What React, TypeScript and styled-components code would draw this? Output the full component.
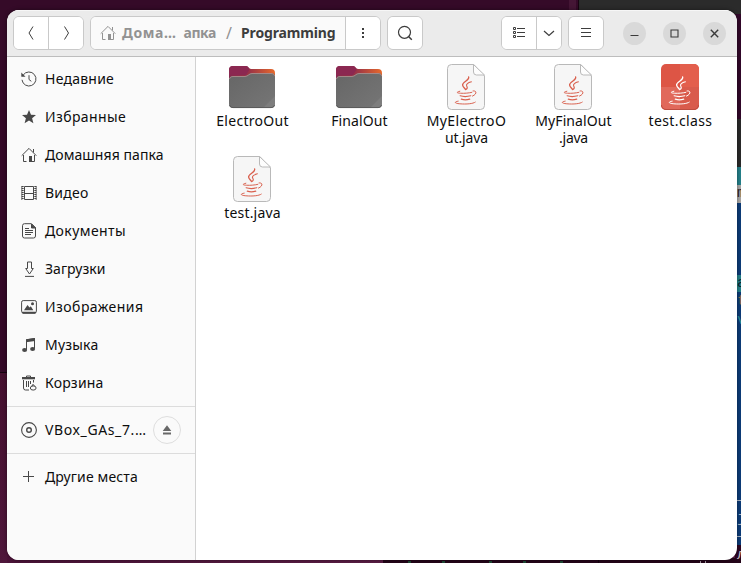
import React from 'react';
import styled, { createGlobalStyle } from 'styled-components';

const GlobalStyle = createGlobalStyle`
  * { box-sizing: border-box; }
  body { margin: 0; overflow: hidden; font-family: "Noto Sans", sans-serif; font-size: 14px; color: #111; }
  button { font: inherit; color: inherit; padding: 0; margin: 0; }
  svg { display: block; flex: none; }
`;

/* ---------- desktop behind the window ---------- */

const Desktop = styled.div`
  position: relative;
  width: 741px;
  height: 563px;
  overflow: hidden;
  background: linear-gradient(to right, #4b1338, #5b1d45 380px);
`;

const Pane = styled.div<{ $x: number; $y: number; $w: number; $h: number; $bg: string }>`
  position: absolute;
  left: ${(p) => p.$x}px;
  top: ${(p) => p.$y}px;
  width: ${(p) => p.$w}px;
  height: ${(p) => p.$h}px;
  background: ${(p) => p.$bg};
`;

const panes: [number, number, number, number, string][] = [
  [0, 0, 578, 372, '#350a28'],
  [0, 372, 7, 1, '#16040f'],
  [0, 373, 7, 190, 'linear-gradient(#45102f, #4f173b)'],
  [569, 0, 7, 12, '#451635'],
  [578, 0, 163, 14, '#2b2b2b'],
  [578, 0, 1, 12, '#170410'],
  [735, 14, 6, 105, '#32082a'],
  [735, 119, 6, 48, '#2a2a2a'],
  [735, 167, 6, 18, '#24808a'],
  [735, 185, 6, 18, '#aaa8a6'],
  [735, 203, 6, 342, '#0d3c78'],
  [735, 275, 6, 17, '#24808a'],
  [737, 500, 4, 1, '#a9b5c6'],
  [737, 536, 4, 1, '#a9b5c6'],
  [735, 545, 6, 18, '#2d0622'],
  [383, 558, 358, 5, '#240519'],
  [598, 558, 1, 5, '#12020d'],
  [408, 561, 3, 2, '#1d4a34'],
  [442, 561, 3, 2, '#1d4a34'],
  [489, 561, 3, 2, '#1d4a34'],
  [523, 561, 3, 2, '#1d4a34'],
  [560, 561, 3, 2, '#1d4a34'],
  [700, 561, 1, 2, '#a89aa4'],
  [705, 561, 1, 2, '#a89aa4'],
];

const Glyph = styled.span<{ $y: number; $c: string }>`
  position: absolute;
  left: 737px;
  top: ${(p) => p.$y}px;
  font: 15px/18px "Liberation Mono", monospace;
  color: ${(p) => p.$c};
`;

/* ---------- window ---------- */

const Window = styled.main`
  position: absolute;
  left: 7px;
  top: 10px;
  width: 730px;
  height: 550px;
  display: flex;
  flex-direction: column;
  border-radius: 12px;
  overflow: hidden;
  background: #fff;
  box-shadow: 0 0 4px rgba(0, 0, 0, 0.45);
`;

const HeaderBar = styled.header`
  flex: none;
  height: 47px;
  display: flex;
  align-items: flex-start;
  padding: 6px 11px 0 6px;
  background: #ebebeb;
  border-bottom: 1px solid #bdbdbd;
  box-shadow: inset 0 1px #f6f6f6;
`;

const Group = styled.div<{ $gap: number }>`
  display: flex;
  height: 34px;
  margin-right: ${(p) => p.$gap}px;
  border: 1px solid #c9c9c9;
  border-radius: 6px;
  overflow: hidden;
  background: #fff;
`;

const ToolButton = styled.button<{ $w: number }>`
  width: ${(p) => p.$w}px;
  display: flex;
  align-items: center;
  justify-content: center;
  border: 0;
  background: #fff;
  color: #3d3d3d;
  & + &, nav + & { border-left: 1px solid #c9c9c9; }
`;

const PathBar = styled.nav`
  width: 254px;
  display: flex;
  align-items: center;
  padding-left: 9px;
  background: #fafafa;
  color: #929292;
  font-weight: 700;
`;

const Crumb = styled.span<{ $track?: number; $gap?: number; $current?: boolean }>`
  white-space: nowrap;
  line-height: 20px;
  letter-spacing: ${(p) => p.$track ?? 0}px;
  margin-left: ${(p) => p.$gap ?? 0}px;
  color: ${(p) => (p.$current ? '#3d3d3d' : '#929292')};
`;

const Slash = styled.span`
  margin-left: 10px;
  width: 6px;
  font-weight: 400;
  font-size: 16px;
  line-height: 20px;
`;

const WindowControls = styled.div`
  margin-left: auto;
  height: 34px;
  display: flex;
  align-items: center;
  gap: 17px;
`;

const ControlButton = styled.button`
  width: 23px;
  height: 23px;
  display: flex;
  align-items: center;
  justify-content: center;
  border: 0;
  border-radius: 50%;
  background: #d9d9d9;
  color: #3a3a3a;
`;

const Body = styled.div`
  flex: 1;
  display: flex;
  min-height: 0;
`;

const Sidebar = styled.aside`
  width: 189px;
  flex: none;
  padding-top: 3px;
  background: #fafafa;
  border-right: 1px solid #d2d2d2;
`;

const Place = styled.div`
  height: 38px;
  display: flex;
  align-items: center;
  padding-left: 14px;
  color: #484848;
`;

const PlaceName = styled.span<{ $track: number }>`
  margin-left: 8px;
  white-space: nowrap;
  line-height: 20px;
  color: #0d0d0d;
  letter-spacing: ${(p) => p.$track}px;
`;

const Separator = styled.hr`
  height: 1px;
  margin: 4px 0;
  border: 0;
  background: #dcdcdc;
`;

const EjectButton = styled.button`
  width: 28px;
  height: 28px;
  margin-left: auto;
  margin-right: 14px;
  display: flex;
  align-items: center;
  justify-content: center;
  border: 1px solid #dedede;
  border-radius: 50%;
  background: #fafafa;
  color: #686868;
`;

const Files = styled.section`
  flex: 1;
  display: grid;
  grid-template-columns: repeat(5, 107px);
  grid-auto-rows: 92px;
  padding: 6px 0 0 3px;
`;

const FileItem = styled.div`
  display: flex;
  flex-direction: column;
  align-items: center;
`;

const FileThumb = styled.div`
  padding-right: 2px;
`;

const FileName = styled.div<{ $track: number }>`
  white-space: nowrap;
  line-height: 17px;
  color: #0d0d0d;
  letter-spacing: ${(p) => p.$track}px;
`;

const FileLabel = styled.div`
  margin-top: 1px;
  text-align: center;
`;

/* ---------- symbolic icons ---------- */

const Icon = ({ children, size = 16 }: { children: React.ReactNode; size?: number }) => (
  <svg width={size} height={size} viewBox={`0 0 ${size} ${size}`} fill="none" stroke="currentColor">
    {children}
  </svg>
);

const HomeIcon = () => (
  <Icon>
    <path d="M.7 8.7 8 1.4l7.3 7.3M2.5 8v6.5h3M13.5 8v6.5h-3M12.5 2v3.4" />
    <path d="M8 9h3v6H8z" fill="currentColor" stroke="none" />
  </Icon>
);

const RecentIcon = () => (
  <Icon>
    <path d="M2.2 4A7 7 0 1 1 1 8.8M8 4.2v4.3l2.3 1.8" />
    <path d="M.3 1.5v4.2h4.2z" fill="currentColor" stroke="none" />
  </Icon>
);

const StarIcon = () => (
  <Icon>
    <path fill="currentColor" stroke="none" d="m8 1 2 4.700 5 .4-3.900 3.200 1.300 5L8 11.600l-4.400 2.700 1.300-5L1 6.100l5-.4z" />
  </Icon>
);

const VideoIcon = () => (
  <Icon>
    <path d="M3.5 1.5h9v13h-9zM3.5 8.5h9" />
    <path d="M1.7 1v14M14.3 1v14" strokeWidth="2" strokeDasharray="1 1" />
    <path d="M.8 1v14M15.2 1v14" strokeWidth=".8" />
  </Icon>
);

const DocumentIcon = () => (
  <Icon>
    <path d="M3.5 .7h7l4 4v8.300a2 2 0 0 1-2 2h-9a2 2 0 0 1-2-2V2.700a2 2 0 0 1 2-2z" />
    <path d="M10.500 1v4h4z" fill="currentColor" />
    <path d="M4 5.5h4M4 7.5h8M4 9.5h8M4 11.5h6" />
  </Icon>
);

const DownloadIcon = () => (
  <Icon>
    <path d="M6.5 1v6.5H4.7L8.5 13l3.8-5.5h-1.8V1zM4 15.4h9" />
  </Icon>
);

const ImageIcon = () => (
  <Icon>
    <rect x=".6" y="1.6" width="14.8" height="12.4" rx="1.6" />
    <path d="M1 13.4h14M1.6 14.200h12.8" strokeWidth="1.3" />
    <path d="M3 11.2 6.5 6l2 2.5 1.3-1.2 2.5 3.9z" fill="currentColor" stroke="none" />
    <circle cx="11.5" cy="4.8" r="1.5" fill="currentColor" stroke="none" />
  </Icon>
);

const MusicIcon = () => (
  <Icon>
    <path d="M5.5 12.5V2.8l8-1.3v10" />
    <path d="M5 2.3 14 1v3L5 5.2z" fill="currentColor" stroke="none" />
    <ellipse cx="3.6" cy="13" rx="2.5" ry="1.9" fill="currentColor" stroke="none" />
    <ellipse cx="11.6" cy="12" rx="2.5" ry="1.9" fill="currentColor" stroke="none" />
  </Icon>
);

const TrashIcon = () => (
  <Icon>
    <path d="M5.5 2.5V1h4v1.5M2.5 5v8a2 2 0 0 0 2 2H8M5.5 6v6M7.5 6v6M9.5 6v3M12.5 5v2.5" />
    <path d="M1 2h13v2.3H1z" fill="currentColor" stroke="none" />
    <ellipse cx="12.2" cy="13" rx="2.9" ry="2.1" fill="#fafafa" />
    <path d="m10.8 11.3 1.2-2 1.4 1.6" />
  </Icon>
);

const DiscIcon = () => (
  <Icon>
    <circle cx="8" cy="8" r="7.4" strokeWidth="1.1" />
    <circle cx="8" cy="8" r="2.3" strokeWidth="1.4" />
  </Icon>
);

const PlusIcon = () => (
  <Icon>
    <path d="M7.5 2v11M2 7.5h11" />
  </Icon>
);

const EjectIcon = () => (
  <Icon>
    <path d="M8 3.2 12.3 9H3.7zM4 10.5h8v2H4z" fill="currentColor" stroke="none" />
  </Icon>
);

/* ---------- file icons ---------- */

const FolderIcon = () => (
  <svg width="48" height="48" viewBox="0 0 48 48">
    <defs>
      <linearGradient id="folderBack">
        <stop offset="0" stopColor="#87274f" />
        <stop offset=".45" stopColor="#9b3346" />
        <stop offset="1" stopColor="#e66a2c" />
      </linearGradient>
      <linearGradient id="folderFront" x2="1" y2="1">
        <stop offset="0" stopColor="#666" />
        <stop offset="1" stopColor="#767676" />
      </linearGradient>
    </defs>
    <path d="M1 7a4 4 0 0 1 4-4h13c2 0 3 3 5 3h20a4 4 0 0 1 4 4v20H1z" fill="url(#folderBack)" />
    <path d="M1 7a4 4 0 0 1 4-4h13c2 0 3 2 3.500 3.500L18 12H1z" fill="#8b2851" />
    <path d="M1 17a4 4 0 0 1 4-4h12c3 0 4-3 7-3h19a4 4 0 0 1 4 4v27a4 4 0 0 1-4 4H5a4 4 0 0 1-4-4z" fill="url(#folderFront)" />
    <path d="M1.500 16c.4-1.500 1.600-2.500 3.500-2.500h12c3 0 4-3 7-3h19c1.800 0 3 .8 3.600 2.300" fill="none" stroke="#b3918f" strokeWidth=".8" />
    <path d="M47 33v8a4 4 0 0 1-4 4h-8z" fill="#858585" opacity=".55" />
    <path d="M1.500 42c.5 1.600 1.800 2.600 3.500 2.600h38c1.700 0 3-1 3.500-2.600" fill="none" stroke="#535353" strokeWidth=".8" />
  </svg>
);

const JavaCup = ({ color }: { color: string }) => (
  <g fill="none" stroke={color} strokeLinecap="round" transform="translate(-1.400 -2.100) scale(1.1)">
    <path d="M25.500 14.500c1 3.200-6 4.500-5.500 7.500.2 1.400 1.500 2.400 2.800 4" strokeWidth="1.200" />
    <path d="M28 19c-3 .8-5.300 2.400-4.200 4 .8 1.200.6 2-.4 2.800" strokeWidth="1" />
    <path d="M17.500 27.600c-3.800.8-2.800 1.700.6 1.800 3.600.2 8-.2 10.300-.8" strokeWidth=".9" />
    <path d="M17.800 31.700c2.500.8 7 .7 9.600 0M18.800 34.800c2.200.8 5.500.7 7.700 0" strokeWidth="1.100" />
    <path d="M29.500 27.300c3.700-.5 3.700 3-.5 4.700" strokeWidth=".9" />
    <path d="M16 36.600c-4 .6-3.500 2 1.500 2.400 6 .5 12 0 14-1.500" strokeWidth=".9" />
  </g>
);

const JavaFileIcon = () => (
  <svg width="48" height="48" viewBox="0 0 48 48">
    <path d="M9.500 1.500h22.300L42.500 13v29.500a4 4 0 0 1-4 4h-29a4 4 0 0 1-4-4v-37a4 4 0 0 1 4-4z" fill="#f6f6f6" stroke="#b9b9b9" />
    <path d="M31.500 1.500v7.500a3 3 0 0 0 3 3h8z" fill="#fdfdfd" stroke="#b9b9b9" />
    <JavaCup color="#d9614f" />
  </svg>
);

const ClassFileIcon = () => (
  <svg width="48" height="48" viewBox="0 0 48 48">
    <rect x="5" y="1" width="38" height="46" rx="5" fill="#dd5545" />
    <path d="M24 1h14a5 5 0 0 1 5 5v18H24z" fill="#e35f4d" />
    <path d="M5 24h19v23H10a5 5 0 0 1-5-5z" fill="#e1695b" />
    <path d="M24 24h19v18a5 5 0 0 1-5 5H24z" fill="#d95b4c" />
    <path d="M5.500 42a4.500 4.500 0 0 0 4.500 4.500h28a4.500 4.500 0 0 0 4.500-4.500" fill="none" stroke="#bd4d40" />
    <JavaCup color="#fff" />
  </svg>
);

/* ---------- data ---------- */

const places: [string, number, () => React.JSX.Element][] = [
  ['Недавние', 0.23, RecentIcon],
  ['Избранные', 0.38, StarIcon],
  ['Домашняя папка', 0.06, HomeIcon],
  ['Видео', 0.24, VideoIcon],
  ['Документы', 0.41, DocumentIcon],
  ['Загрузки', 0.04, DownloadIcon],
  ['Изображения', 0.45, ImageIcon],
  ['Музыка', 0.21, MusicIcon],
  ['Корзина', 0.19, TrashIcon],
];

const files: { icon: () => React.JSX.Element; lines: [string, number][] }[] = [
  { icon: FolderIcon, lines: [['ElectroOut', 0.28]] },
  { icon: FolderIcon, lines: [['FinalOut', 0.11]] },
  { icon: JavaFileIcon, lines: [['MyElectroO', 0.36], ['ut.java', -0.13]] },
  { icon: JavaFileIcon, lines: [['MyFinalOut', 0.1], ['.java', -0.24]] },
  { icon: ClassFileIcon, lines: [['test.class', 0.38]] },
  { icon: JavaFileIcon, lines: [['test.java', 0.18]] },
];

export default function App() {
  return (
    <Desktop>
      <GlobalStyle />
      {panes.map(([x, y, w, h, bg], i) => (
        <Pane key={i} $x={x} $y={y} $w={w} $h={h} $bg={bg} />
      ))}
      <Glyph $y={185} $c="#30242c">m</Glyph>
      <Glyph $y={275} $c="#0b2431">a</Glyph>
      <Glyph $y={293} $c="#8a6a58">t</Glyph>
      <Glyph $y={312} $c="#2a8f9c">v</Glyph>
      <Glyph $y={510} $c="#a9b5c6">j</Glyph>
      <Glyph $y={547} $c="#c5bdc2">л</Glyph>

      <Window>
        <HeaderBar>
          <Group $gap={6}>
            <ToolButton $w={34} aria-label="Назад">
              <Icon><path d="M10 1.500 6 8l4 6.500" /></Icon>
            </ToolButton>
            <ToolButton $w={35} aria-label="Вперёд">
              <Icon><path d="m6.500 1.500 4 6.500-4 6.500" /></Icon>
            </ToolButton>
          </Group>

          <Group $gap={6}>
            <PathBar>
              <HomeIcon />
              <Crumb $track={0.58} $gap={6}>Дома…</Crumb>
              <Crumb $track={-0.41} $gap={7}>апка</Crumb>
              <Slash>/</Slash>
              <Crumb $track={-0.14} $gap={9} $current>Programming</Crumb>
            </PathBar>
            <ToolButton $w={35} aria-label="Действия">
              <Icon>
                <path d="M7 3h2v2H7zM7 7h2v2H7zM7 11h2v2H7z" fill="currentColor" stroke="none" />
              </Icon>
            </ToolButton>
          </Group>

          <Group $gap={78}>
            <ToolButton $w={34} aria-label="Поиск">
              <Icon>
                <circle cx="7.500" cy="7.300" r="6" strokeWidth="1.200" />
                <path d="m11.300 11.300 3.500 3.400" strokeWidth="1.500" />
              </Icon>
            </ToolButton>
          </Group>

          <Group $gap={6}>
            <ToolButton $w={34} aria-label="Список">
              <Icon>
                <path d="M2.500 2.500h2v2h-2zM2.500 6.500h2v2h-2zM2.500 10.500h2v2h-2zM6 3.500h8M6 7.500h8M6 11.500h8" />
              </Icon>
            </ToolButton>
            <ToolButton $w={25} aria-label="Вид">
              <Icon><path d="m3 6 5 4.500L13 6" strokeWidth="1.200" /></Icon>
            </ToolButton>
          </Group>

          <Group $gap={0}>
            <ToolButton $w={34} aria-label="Меню">
              <Icon><path d="M3 3.500h10M3 7.500h10M3 11.500h10" /></Icon>
            </ToolButton>
          </Group>

          <WindowControls>
            <ControlButton aria-label="Свернуть">
              <Icon size={9}><path d="M.5 6.500h8" strokeWidth="1.200" /></Icon>
            </ControlButton>
            <ControlButton aria-label="Развернуть">
              <Icon size={9}><path d="M1 1h7v7H1z" strokeWidth="1.100" /></Icon>
            </ControlButton>
            <ControlButton aria-label="Закрыть">
              <Icon size={9}><path d="m.8.8 7.400 7.400M8.200.8.8 8.200" strokeWidth="1.400" /></Icon>
            </ControlButton>
          </WindowControls>
        </HeaderBar>

        <Body>
          <Sidebar>
            {places.map(([name, track, PlaceIcon]) => (
              <Place key={name}>
                <PlaceIcon />
                <PlaceName $track={track}>{name}</PlaceName>
              </Place>
            ))}
            <Separator />
            <Place>
              <DiscIcon />
              <PlaceName $track={0.62}>VBox_GAs_7.…</PlaceName>
              <EjectButton aria-label="Извлечь"><EjectIcon /></EjectButton>
            </Place>
            <Separator />
            <Place>
              <PlusIcon />
              <PlaceName $track={0.13}>Другие места</PlaceName>
            </Place>
          </Sidebar>

          <Files>
            {files.map(({ icon: FileIcon, lines }, i) => (
              <FileItem key={i}>
                <FileThumb><FileIcon /></FileThumb>
                <FileLabel>
                  {lines.map(([text, track]) => (
                    <FileName key={text} $track={track}>{text}</FileName>
                  ))}
                </FileLabel>
              </FileItem>
            ))}
          </Files>
        </Body>
      </Window>
    </Desktop>
  );
}
